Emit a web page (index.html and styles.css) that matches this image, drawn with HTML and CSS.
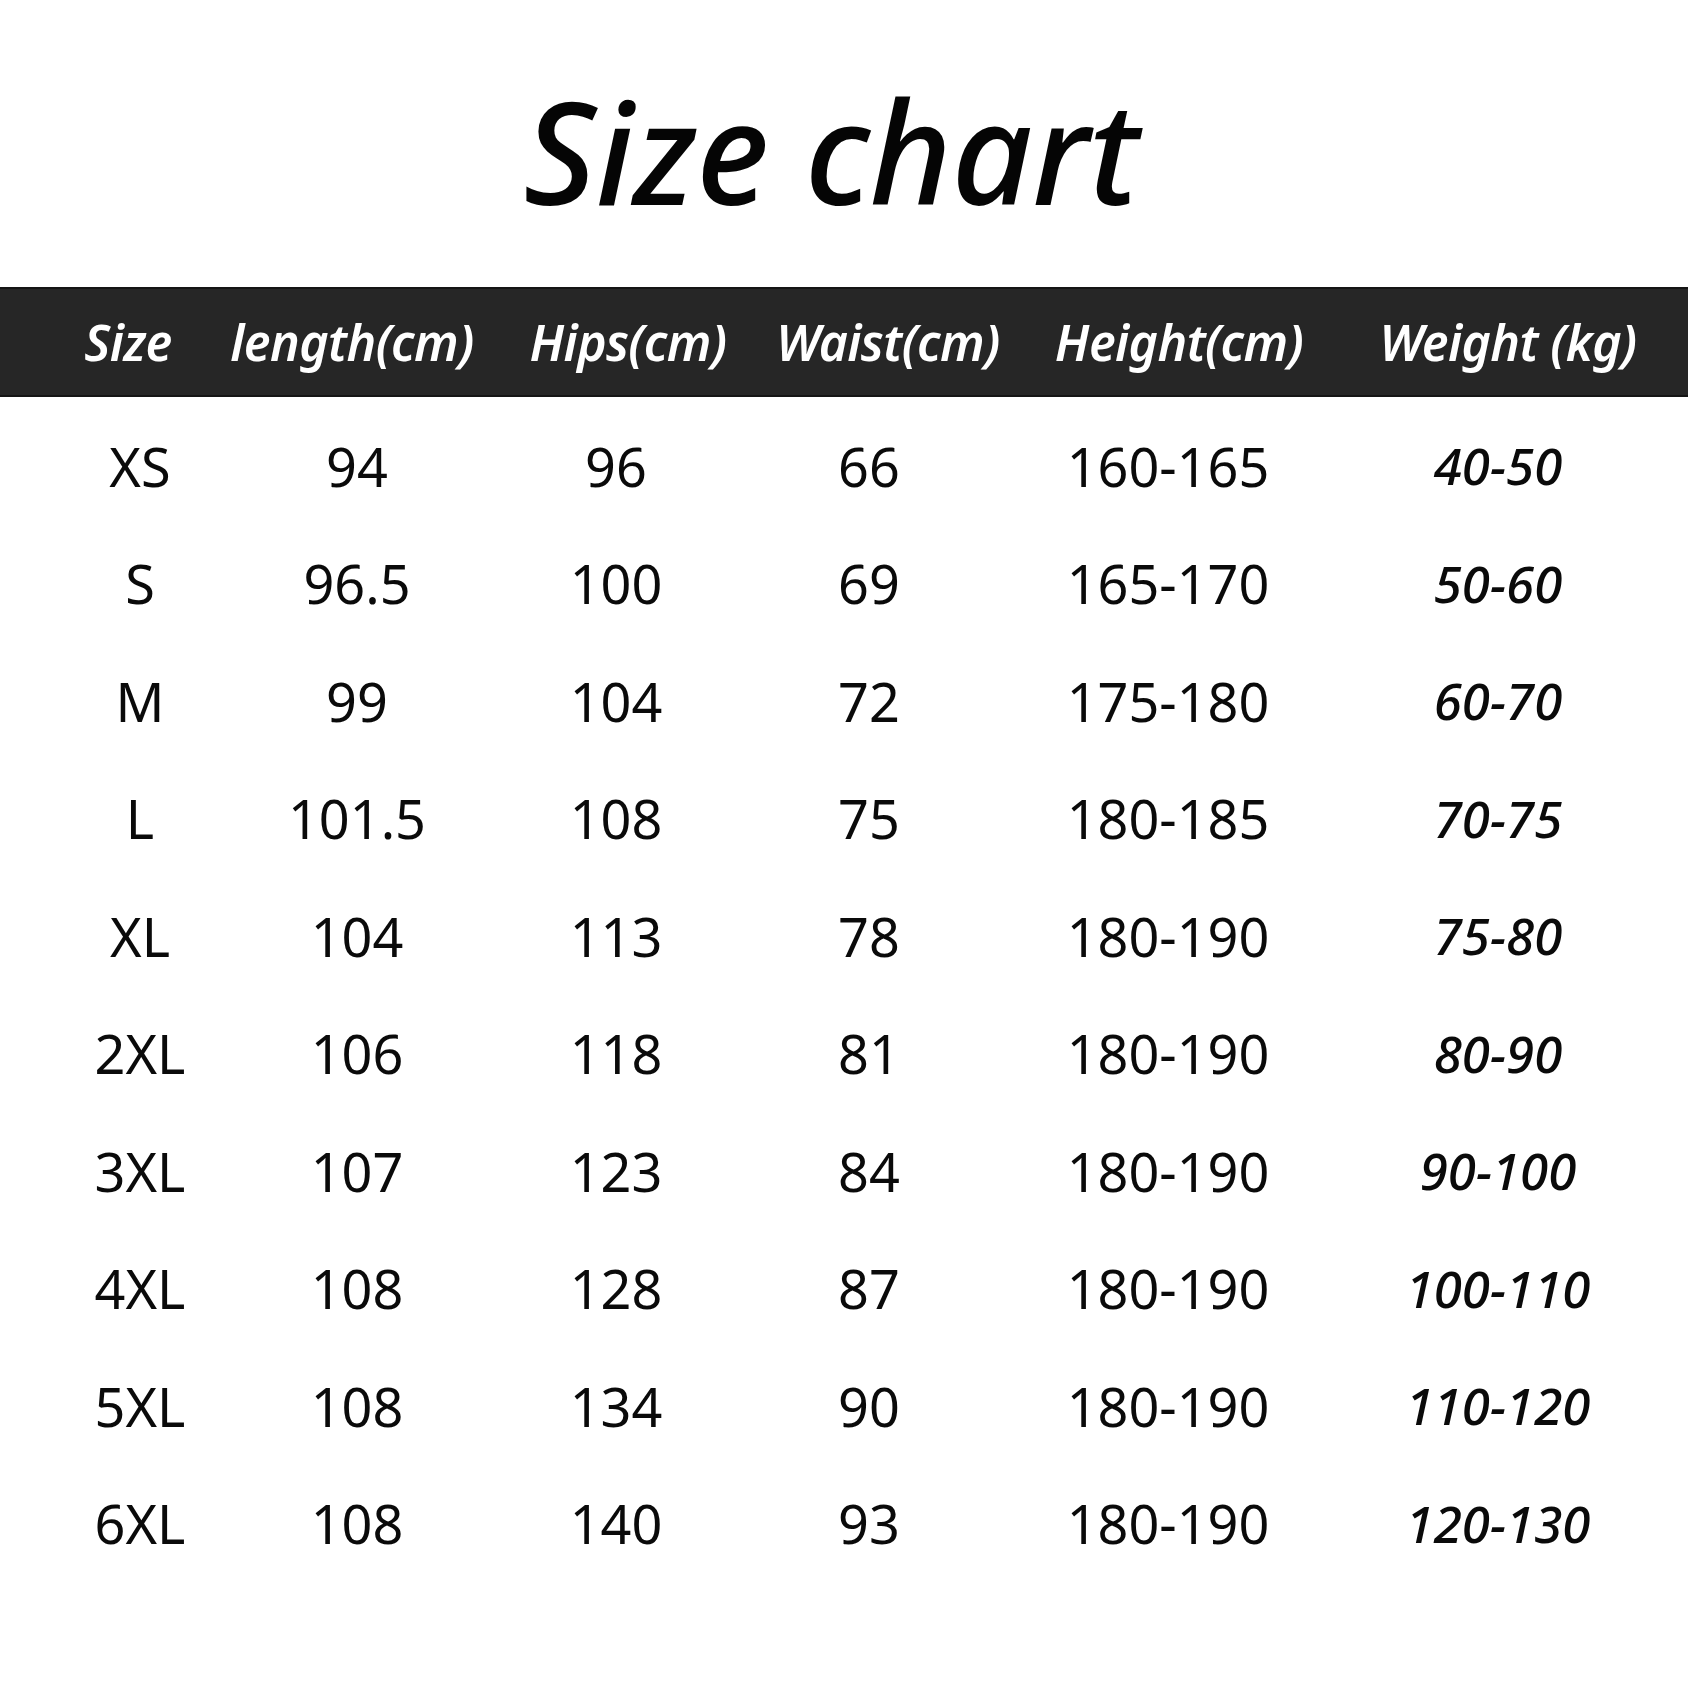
FILE: index.html
```html
<!DOCTYPE html>
<html lang="en">
<head>
<meta charset="utf-8">
<title>Size chart</title>
<link rel="stylesheet" href="styles.css">
</head>
<body>
<main class="page">
  <h1 class="title">Size chart</h1>
  <div class="head">
    <div class="hc">Size</div>
    <div class="hc">length(cm)</div>
    <div class="hc">Hips(cm)</div>
    <div class="hc">Waist(cm)</div>
    <div class="hc">Height(cm)</div>
    <div class="hc">Weight (kg)</div>
  </div>
  <div class="rows">
    <div class="row"><span>XS</span><span>94</span><span>96</span><span>66</span><span>160-165</span><span class="w">40-50</span></div>
    <div class="row"><span>S</span><span>96.5</span><span>100</span><span>69</span><span>165-170</span><span class="w">50-60</span></div>
    <div class="row"><span>M</span><span>99</span><span>104</span><span>72</span><span>175-180</span><span class="w">60-70</span></div>
    <div class="row"><span>L</span><span>101.5</span><span>108</span><span>75</span><span>180-185</span><span class="w">70-75</span></div>
    <div class="row"><span>XL</span><span>104</span><span>113</span><span>78</span><span>180-190</span><span class="w">75-80</span></div>
    <div class="row"><span>2XL</span><span>106</span><span>118</span><span>81</span><span>180-190</span><span class="w">80-90</span></div>
    <div class="row"><span>3XL</span><span>107</span><span>123</span><span>84</span><span>180-190</span><span class="w">90-100</span></div>
    <div class="row"><span>4XL</span><span>108</span><span>128</span><span>87</span><span>180-190</span><span class="w">100-110</span></div>
    <div class="row"><span>5XL</span><span>108</span><span>134</span><span>90</span><span>180-190</span><span class="w">110-120</span></div>
    <div class="row"><span>6XL</span><span>108</span><span>140</span><span>93</span><span>180-190</span><span class="w">120-130</span></div>
  </div>
</main>
</body>
</html>
```

FILE: styles.css
```css
html, body {
  margin: 0;
  padding: 0;
  background: #ffffff;
}
body {
  font-family: "Noto Sans", "Open Sans", sans-serif;
  color: #0a0a0a;
}
.page {
  width: 1688px;
  height: 1688px;
  display: flex;
  flex-direction: column;
}
.title {
  margin: 0;
  padding: 80px 26px 0 0;
  height: 140px;
  font-size: 141px;
  line-height: 1;
  font-style: italic;
  font-weight: 500;
  text-align: center;
  letter-spacing: -0.5px;
  color: #050505;
}
.head {
  margin-top: 67px;
  height: 106px;
  background: #262626;
  border-top: 2px solid #151515;
  border-bottom: 2px solid #151515;
  display: grid;
  grid-template-columns: 216px 232px 320px 200px 382px 276px;
  justify-items: center;
  padding-left: 20px;
  align-items: center;
}
.hc {
  color: #ffffff;
  font-size: 50px;
  line-height: 1;
  font-style: italic;
  font-weight: 600;
  letter-spacing: -0.6px;
  white-space: nowrap;
}
.rows {
  padding-top: 10px;
  display: flex;
  flex-direction: column;
}
.row {
  height: 117.5px;
  display: grid;
  grid-template-columns: 200px 234px 284px 222px 376px 276px;
  justify-items: center;
  padding-left: 40px;
  align-items: center;
}
.row span {
  font-size: 54px;
  line-height: 1;
  font-weight: 400;
  white-space: nowrap;
}
.row span.w {
  font-size: 51px;
  font-style: italic;
  font-weight: 500;
  margin-left: 8px;
}
```
